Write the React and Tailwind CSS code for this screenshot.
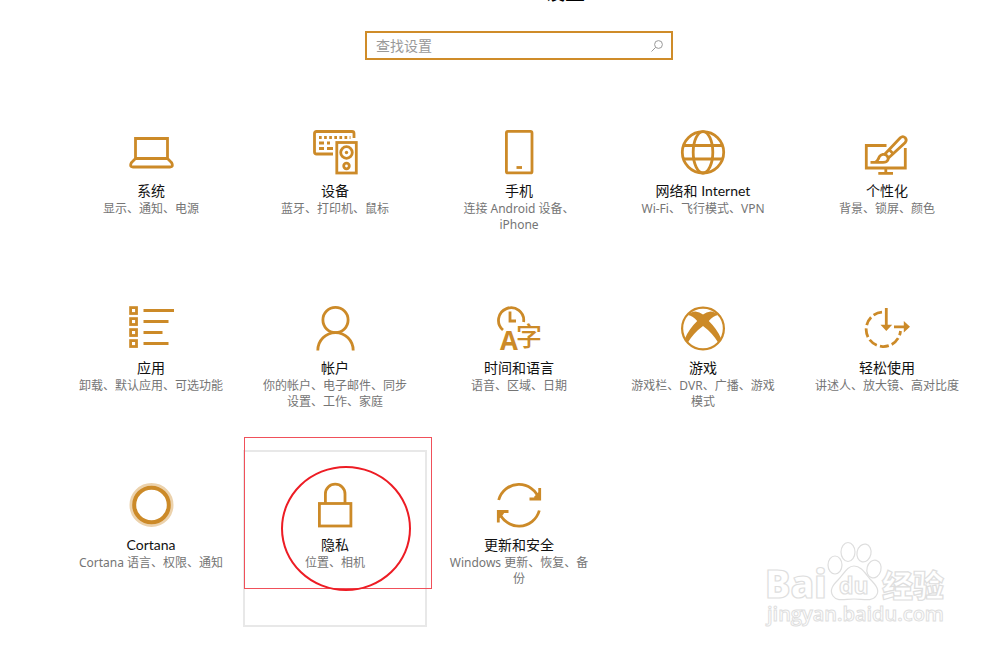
const stroke = { fill: "none", stroke: "currentColor", strokeWidth: 2.8 };

const SystemIcon = () => (
  <g {...stroke}>
    <path d="M6.5 29.5V9.5H38.5V29.5Z" />
    <path d="M6.5 29.5L2.5 33.5Q0 38 4 38H41Q45 38 42.5 33.5L38.5 29.5" />
  </g>
);

const DevicesIcon = () => (
  <g {...stroke}>
    <path d="M20 25H3.5Q1.5 25 1.5 23V4.5Q1.5 2.5 3.5 2.5H39Q41 2.5 41 4.5V9" />
    <path d="M6 8.5H37.5" strokeDasharray="2.7 2.4" />
    <path d="M6 14H11M14 14H17M6 19.5H11M14 19.5H20" />
    <rect x="23.8" y="13.5" width="19.5" height="30.5" />
    <circle cx="33.5" cy="23.5" r="5.8" />
    <circle cx="33.5" cy="23.5" r="1.7" fill="currentColor" stroke="none" />
    <circle cx="33.5" cy="37" r="2.8" />
  </g>
);

const PhoneIcon = () => (
  <g {...stroke}>
    <rect x="9.4" y="2.4" width="25.6" height="41.5" rx="1.5" />
    <path d="M19.5 38.5H25" />
  </g>
);

const NetworkIcon = () => (
  <g {...stroke}>
    <circle cx="22" cy="23.3" r="20.7" />
    <ellipse cx="22" cy="23.3" rx="9.8" ry="20.7" />
    <path d="M3 16.5H41M3 30H41" />
  </g>
);

const PersonalizationIcon = () => (
  <g {...stroke}>
    <path d="M21.5 16.5H1.3V39H40.3V19M20.8 39V44M13.3 44.3H28" />
    <path d="M5.5 33.3H10C13 32.5 13 30 14.5 27.5C16 25 19.5 24.5 22 26.7C24.5 29.5 23 33.3 18 33.3H10" />
    <path d="M19.5 25.5L35.3 8.8Q37.8 6.5 40.2 8.7Q42.3 11 40 13.8L23.5 29M24 20.5L28.5 25" />
  </g>
);

const AppsIcon = () => (
  <g {...stroke}>
    {[4.5, 15.5, 26.5, 37.5].map((y) => (
      <rect key={y} x="1.6" y={y - 2.9} width="5.9" height="5.9" />
    ))}
    <path d="M14.5 4.5H45M14.5 15.5H39.5M14.5 26.5H33.500M14.500 37.500H39.500" />
  </g>
);

const AccountsIcon = () => (
  <g {...stroke}>
    <circle cx="22.5" cy="14" r="12.6" />
    <path d="M4.800 44.500A17.700 17.900 0 0 1 40.200 44.500" />
  </g>
);

const TimeIcon = () => (
  <g>
    <path d="M6 24A12.6 12.6 0 1 1 26.6 16" {...stroke} />
    <path d="M13 5.5V15H19" {...stroke} />
    <g fill="currentColor">
      <text x="3" y="44" fontSize="26" fontWeight="700" fontFamily="Open Sans, sans-serif">
        A
      </text>
      <text x="19" y="40" fontSize="26" fontWeight="500" fontFamily="Noto Sans CJK SC, sans-serif">
        字
      </text>
    </g>
  </g>
);

const GamingIcon = () => (
  <g>
    <circle cx="22" cy="22.5" r="20.9" {...stroke} strokeWidth="2.2" />
    <path
      d="M7 9Q10 5.5 14.5 5.5Q18.5 6 22 8.5Q25.5 6 29.5 5.5Q34 5.5 37 9Q32 10 27.8 15Q36 23 39.8 32L37.5 37Q31 26.5 22 20Q13 26.5 6.5 37L4.2 32Q8 23 16.2 15Q12 10 7 9Z"
      fill="currentColor"
    />
  </g>
);

const EaseIcon = () => (
  <g {...stroke}>
    <path d="M17 6.2A17.2 17.2 0 1 0 35.5 25" strokeDasharray="9 3.2" />
    <path d="M21.3 2V21M29 20.8H41" />
    <path d="M15.500 18.800H27.200L21.300 25ZM38.800 15V26.600L45 20.800Z" fill="currentColor" stroke="none" />
  </g>
);

const CortanaIcon = () => (
  <g fill="none">
    <circle cx="22.5" cy="22" r="20" stroke="#ecd2ac" strokeWidth="4" />
    <circle cx="22.5" cy="22" r="17.3" stroke="currentColor" strokeWidth="4" />
  </g>
);

const PrivacyIcon = () => (
  <g {...stroke}>
    <rect x="6.4" y="20.5" width="31.5" height="22.5" />
    <path d="M12.4 20.5V11A9.8 9.8 0 0 1 32 11V20.5" />
  </g>
);

const UpdateIcon = () => (
  <g {...stroke}>
    <path d="M1.7 17A21 21 0 0 1 42 16M42.7 5V16H32.500M38 15L42.500 10" />
    <path d="M42.3 27.5A21 21 0 0 1 2 28.5M1.300 39.500V28.500H11.500M6 29.500L1.500 34.500" />
  </g>
);

const categories = [
  { id: "system", title: "系统", text: "显示、通知、电源", Icon: SystemIcon },
  { id: "devices", title: "设备", text: "蓝牙、打印机、鼠标", Icon: DevicesIcon },
  { id: "phone", title: "手机", text: "连接 Android 设备、iPhone", Icon: PhoneIcon },
  { id: "network", title: "网络和 Internet", text: "Wi-Fi、飞行模式、VPN", Icon: NetworkIcon },
  { id: "personalization", title: "个性化", text: "背景、锁屏、颜色", Icon: PersonalizationIcon },
  { id: "apps", title: "应用", text: "卸载、默认应用、可选功能", Icon: AppsIcon },
  { id: "accounts", title: "帐户", text: "你的帐户、电子邮件、同步设置、工作、家庭", Icon: AccountsIcon },
  { id: "time", title: "时间和语言", text: "语音、区域、日期", Icon: TimeIcon },
  { id: "gaming", title: "游戏", text: "游戏栏、DVR、广播、游戏模式", Icon: GamingIcon },
  { id: "ease", title: "轻松使用", text: "讲述人、放大镜、高对比度", Icon: EaseIcon },
  { id: "cortana", title: "Cortana", text: "Cortana 语言、权限、通知", Icon: CortanaIcon },
  { id: "privacy", title: "隐私", text: "位置、相机", Icon: PrivacyIcon, marked: true },
  { id: "update", title: "更新和安全", text: "Windows 更新、恢复、备份", Icon: UpdateIcon },
];

function Tile({ item }) {
  const { id, title, text, Icon, marked } = item;
  return (
    <a
      href={`#${id}`}
      className={`relative flex h-[177px] flex-col items-center border-2 px-4 pt-[31px] text-center ${marked ? "border-[#e8e8e8]" : "border-transparent"}`}
    >
      <svg viewBox="0 0 44 45" className="h-[45px] w-11 shrink-0 overflow-visible text-[#cc8a28]" aria-hidden="true">
        <Icon />
      </svg>
      <span className="mt-[7px] font-['Lato','Noto_Sans_CJK_SC',sans-serif] text-sm leading-5 text-[#111111]">{title}</span>
      <span className="text-xs leading-4 text-[#757575]">{text}</span>
      {marked && (
        <>
          <span className="absolute -top-[15px] -left-px h-[152px] w-[188px] border border-[#f0505a]" />
          <span className="absolute top-3.5 left-[36px] h-[125px] w-[130px] rounded-[50%] border-2 border-[#ed1c24]" />
        </>
      )}
    </a>
  );
}

function Watermark() {
  return (
    <svg
      viewBox="0 0 190 92"
      className="pointer-events-none absolute right-[46px] bottom-[18px] h-[92px] w-[190px]"
      fill="#ffffff"
      stroke="#dedede"
      strokeWidth="1.2"
      fontFamily="Open Sans, Noto Sans CJK SC, sans-serif"
      fontWeight="800"
    >
      <text x="1" y="58" fontSize="38">Bai</text>
      <ellipse cx="71" cy="25" rx="7" ry="9" />
      <ellipse cx="84" cy="12" rx="7" ry="9.5" />
      <ellipse cx="100" cy="13" rx="7" ry="9" transform="rotate(12 100 13)" />
      <ellipse cx="110" cy="29" rx="7" ry="9" transform="rotate(15 110 29)" />
      <path d="M90 26C97 26 101 33 106 39C113 46 116 51 112 56C108 62 99 59 90 59C81 59 73 62 69 56C65 50 69 45 74 40C80 34 83 26 90 26Z" />
      <text x="75" y="54" fontSize="23" fontWeight="700">du</text>
      <text x="118" y="57" fontSize="31">经验</text>
      <text x="3" y="81" fontSize="20" fontWeight="600" strokeWidth="1">jingyan.baidu.com</text>
    </svg>
  );
}

export default function App() {
  return (
    <div className="relative min-h-screen overflow-hidden bg-white pr-[21px] pl-[59px] font-['Noto_Sans','Noto_Sans_CJK_SC',sans-serif]">
      <header className="flex flex-col items-center">
        <h1 className="-mt-[19px] text-xl leading-6 font-medium text-black">Windows 设置</h1>
        <label className="mt-[26px] flex h-[29px] w-[308px] items-center border-2 border-[#cf8c29] px-2">
          <input
            type="text"
            aria-label="查找设置"
            placeholder="查找设置"
            className="min-w-0 flex-1 px-px text-sm outline-none placeholder:text-[#999999]"
          />
          <svg viewBox="0 0 12 12" className="size-3 shrink-0" fill="none" stroke="#999999" aria-hidden="true">
            <circle cx="7.5" cy="4.5" r="3.9" />
            <path d="M4.7 7.3L0.5 11.5" />
          </svg>
        </label>
      </header>

      <main className="mt-9 grid grid-cols-5">
        {categories.map((item) => (
          <Tile key={item.id} item={item} />
        ))}
      </main>

      <Watermark />
    </div>
  );
}
